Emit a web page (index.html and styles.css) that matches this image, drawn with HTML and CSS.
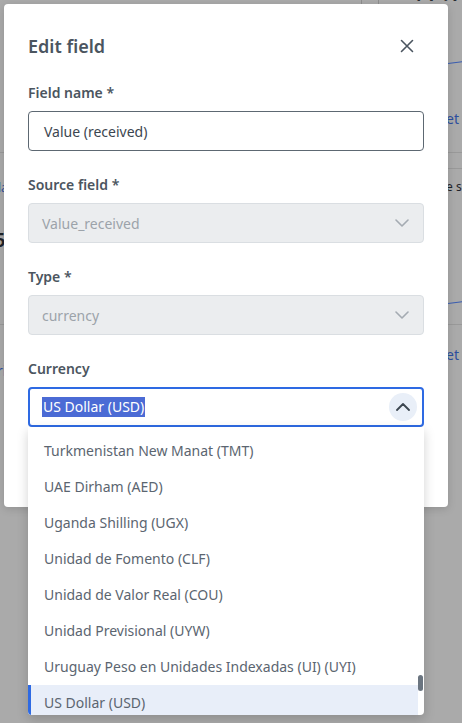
FILE: index.html
```html
<!DOCTYPE html>
<html>
<head>
<meta charset="utf-8">
<link rel="stylesheet" href="styles.css">
</head>
<body>
<div class="backdrop">
  <span class="bg-big bg-big-left">59.75%</span>
  <span class="bg-big bg-big-right">17.79</span>
  <span class="bg-vline v1"></span>
  <span class="bg-vline v2"></span>
  <span class="bg-hline h1"></span>
  <span class="bg-hline h2"></span>
  <span class="bg-hline h3"></span>
  <span class="bg-hline h4"></span>
  <span class="bg-link l1">et</span>
  <span class="bg-link l2">et</span>
  <span class="bg-link l3">la</span>
  <span class="bg-link l4">ri</span>
  <span class="bg-dark d1">5</span>
  <span class="bg-dark d2">e s</span>
  <span class="bg-curve c1"></span>
  <span class="bg-curve c2"></span>
</div>

<div class="modal">
  <div class="modal-header">
    <h2 class="modal-title">Edit field</h2>
    <button class="close-btn" aria-label="Close">
      <svg width="14" height="14" viewBox="0 0 14 14"><path d="M1.5 1.5 L12.5 12.5 M12.5 1.5 L1.5 12.5" stroke="#4b5560" stroke-width="1.6" stroke-linecap="round" fill="none"/></svg>
    </button>
  </div>

  <div class="field">
    <label class="field-label">Field name *</label>
    <div class="control input">Value (received)</div>
  </div>

  <div class="field">
    <label class="field-label">Source field *</label>
    <div class="control select disabled">
      <span>Value_received</span>
      <svg class="chev" width="14" height="8" viewBox="0 0 14 8"><path d="M1 1 L7 7 L13 1" stroke="#a4abb2" stroke-width="1.6" fill="none" stroke-linecap="round" stroke-linejoin="round"/></svg>
    </div>
  </div>

  <div class="field">
    <label class="field-label">Type *</label>
    <div class="control select disabled">
      <span>currency</span>
      <svg class="chev" width="14" height="8" viewBox="0 0 14 8"><path d="M1 1 L7 7 L13 1" stroke="#a4abb2" stroke-width="1.6" fill="none" stroke-linecap="round" stroke-linejoin="round"/></svg>
    </div>
  </div>

  <div class="field last">
    <label class="field-label">Currency</label>
    <div class="combo">
      <div class="control select focused">
        <span class="selected-text">US Dollar (USD)</span>
        <span class="chev-circle">
          <svg width="14" height="8" viewBox="0 0 14 8"><path d="M1 7 L7 1 L13 7" stroke="#3c4650" stroke-width="1.8" fill="none" stroke-linecap="round" stroke-linejoin="round"/></svg>
        </span>
      </div>
      <div class="dropdown">
        <ul class="options">
          <li>Turkish Lira (TRY)</li>
          <li>Turkmenistan New Manat (TMT)</li>
          <li>UAE Dirham (AED)</li>
          <li>Uganda Shilling (UGX)</li>
          <li>Unidad de Fomento (CLF)</li>
          <li>Unidad de Valor Real (COU)</li>
          <li>Unidad Previsional (UYW)</li>
          <li>Uruguay Peso en Unidades Indexadas (UI) (UYI)</li>
          <li class="active">US Dollar (USD)</li>
        </ul>
        <span class="scroll-thumb"></span>
      </div>
    </div>
  </div>
</div>
</body>
</html>
```

FILE: styles.css
```css
* { box-sizing: border-box; }
html, body {
  margin: 0;
  padding: 0;
  width: 462px;
  height: 723px;
  overflow: hidden;
  font-family: "Noto Sans", "Open Sans", sans-serif;
}
body {
  background: #aaaaaa;
  position: relative;
}

/* dimmed page behind the dialog */
.backdrop {
  position: absolute;
  inset: 0;
  overflow: hidden;
}
.bg-big {
  position: absolute;
  font-size: 28px;
  color: #2a2e33;
  line-height: 28px;
}
.bg-big-left { left: -4px; top: -25px; }
.bg-big-right { left: 410px; top: -24px; }
.bg-vline { position: absolute; top: 0; width: 1px; height: 6px; background: #8e8e8e; }
.v1 { left: 361px; }
.v2 { left: 378px; }
.bg-hline { position: absolute; height: 1px; background: #999; }
.h1 { left: 0; width: 6px; top: 152px; }
.h2 { left: 446px; width: 16px; top: 152px; }
.h3 { left: 446px; width: 16px; top: 168px; }
.h4 { left: 0; width: 462px; top: 324px; }
.bg-link { position: absolute; color: #2d4e9e; font-size: 14px; }
.l1 { left: 446px; top: 109px; }
.l2 { left: 446px; top: 345px; }
.l3 { left: -2px; top: 179px; font-size: 12px; }
.l4 { left: -3px; top: 361px; }
.bg-dark { position: absolute; color: #1e2329; }
.d1 { left: -6px; top: 226px; font-size: 20px; font-weight: 600; }
.d2 { left: 446px; top: 178px; font-size: 12px; }
.bg-curve { position: absolute; height: 1px; background: #3a5db0; transform: rotate(-8deg); }
.c1 { left: 448px; top: 62px; width: 16px; }
.c2 { left: 448px; top: 302px; width: 16px; }

/* dialog */
.modal {
  position: absolute;
  left: 4px;
  top: 4px;
  width: 444px;
  height: 503px;
  background: #ffffff;
  border-radius: 4px;
  padding: 24px 24px 0 24px;
  box-shadow: 0 2px 8px rgba(0,0,0,0.15);
}
.modal-header {
  display: flex;
  align-items: center;
  justify-content: space-between;
  height: 36px;
  margin-bottom: 18px;
}
.modal-title {
  margin: 0;
  font-size: 18px;
  font-weight: 600;
  color: #4b5560;
  line-height: 36px;
}
.close-btn {
  border: 0;
  background: transparent;
  padding: 0;
  width: 28px;
  height: 28px;
  margin-right: 3px;
  display: flex;
  align-items: center;
  justify-content: center;
}

.field { margin-bottom: 23px; }
.field.last { margin-bottom: 0; }
.field-label {
  display: block;
  font-size: 14px;
  font-weight: 600;
  color: #4b5560;
  line-height: 21px;
  margin-bottom: 8px;
}
.control {
  height: 40px;
  border-radius: 4px;
  display: flex;
  align-items: center;
  font-size: 14px;
}
.input {
  border: 1px solid #5d6872;
  padding: 0 15px;
  color: #3c4650;
}
.select {
  justify-content: space-between;
  padding: 0 14px 0 13px;
}
.select.disabled {
  background: #ebedef;
  border: 1px solid #dadee2;
  color: #9ca3aa;
}
.chev { margin-right: 0; }

.combo { position: relative; }
.select.focused {
  border: 2px solid #2e6ae3;
  padding: 0 5px 0 12px;
  color: #ffffff;
}
.selected-text {
  background: #4b6bd5;
  color: #ffffff;
  line-height: 20px;
  padding: 0 1px;
}
.chev-circle {
  width: 28px;
  height: 28px;
  border-radius: 50%;
  background: #e9eff8;
  display: flex;
  align-items: center;
  justify-content: center;
}

.dropdown {
  position: absolute;
  left: 0;
  right: 0;
  top: 40px;
  height: 288px;
  background: #ffffff;
  border-radius: 0 0 4px 4px;
  overflow: hidden;
  box-shadow: 0 4px 12px rgba(0,0,0,0.18);
  z-index: 5;
}
.options {
  list-style: none;
  margin: -30px 6px 0 0;
  padding: 0;
}
.options li {
  height: 36px;
  line-height: 36px;
  padding-left: 16px;
  font-size: 14px;
  color: #5b6570;
  white-space: nowrap;
}
.options li.active {
  background: #e8eef9;
  box-shadow: inset 3px 0 0 #2e6ae3;
}
.scroll-thumb {
  position: absolute;
  right: 1px;
  top: 248px;
  width: 5px;
  height: 16px;
  border-radius: 3px;
  background: #6b7580;
}
```
